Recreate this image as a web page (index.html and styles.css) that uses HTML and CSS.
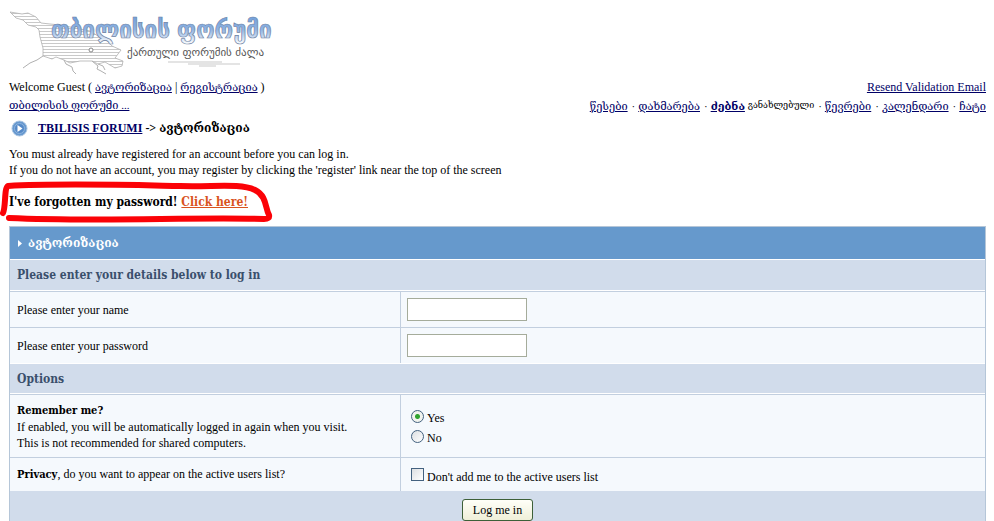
FILE: index.html
```html
<!DOCTYPE html>
<html lang="ka">
<head>
<meta charset="utf-8">
<title>თბილისის ფორუმი</title>
<link rel="stylesheet" href="styles.css">
</head>
<body>
<header>
  <svg class="logo" width="270" height="70" viewBox="9 7 270 70" role="img" aria-label="თბილისის ფორუმი">
    <defs>
      <linearGradient id="sky" x1="0" y1="0" x2="0" y2="1">
        <stop offset="0" stop-color="#6f9fdc"/><stop offset=".5" stop-color="#8fb3e2"/><stop offset="1" stop-color="#fff"/>
      </linearGradient>
      <pattern id="lines" width="4" height="3" patternUnits="userSpaceOnUse"><path d="M0 1.5H4" stroke="#bbb" stroke-width=".8"/></pattern>
    </defs>
    <path class="map" d="M10 12 16 18 23 20 28 25 36 27 39 30 40 37 43 48 43 56 52 59 56 57 64 60 70 63 80 61 92 61 98 64 105 62 115 68 122 66 123 61 115 58 121 50 112 46 107 41 98 36 90 31 75 28 60 25 50 24 41 23 36 17 28 13 22 14Z"/>
    <path class="coast" d="M43 56 37 60 30 63 23 68M64 60 66 64 72 67 73 71 76 74M92 61 98 66 97 69 101 71 106 74M98 64 103 66 105 70"/>
    <circle cx="91" cy="50" r="2" fill="#fff" stroke="#888"/>
    <text class="logo-title" x="51" y="38">თბილისის</text>
    <text class="logo-title" x="177" y="38">ფორუმი</text>
    <text class="logo-sub" x="127" y="56">ქართული ფორუმის ძალა</text>
    <path d="M168 62H222M188 64H240M199 66H216" stroke="#bbb" stroke-width=".8"/>
  </svg>
  <div class="bar">
    <div>Welcome Guest ( <a class="geo" href="#">ავტორიზაცია</a> | <a class="geo" href="#">რეგისტრაცია</a> )</div>
    <a href="#">Resend Validation Email</a>
  </div>
  <div class="bar geo">
    <a href="#">თბილისის ფორუმი ...</a>
    <nav>
      <a href="#">წესები</a><i>·</i><a href="#">დახმარება</a><i>·</i><a href="#"><b>ძებნა</b></a> <span class="fresh">განახლებული</span><i>·</i><a href="#">წევრები</a><i>·</i><a href="#">კალენდარი</a><i>·</i><a href="#">ჩატი</a>
    </nav>
  </div>
</header>
<div class="crumbs">
  <svg width="17" height="17" viewBox="0 0 17 17" aria-hidden="true">
    <circle cx="8.500" cy="8.500" r="7.500" fill="#6799cf" stroke="#a9c4e2"/>
    <circle cx="8.500" cy="8.500" r="5" fill="#5489c8" stroke="#8fb4de"/>
    <path d="M6.500 5 11.500 8.500 6.500 12Z" fill="#fff"/>
  </svg>
  <div><a href="#">TBILISIS FORUMI</a> -&gt; ავტორიზაცია</div>
</div>
<p class="intro">You must already have registered for an account before you can log in.<br>If you do not have an account, you may register by clicking the 'register' link near the top of the screen</p>
<p class="forgot">I've forgotten my password! <a href="#">Click here!</a>
  <svg class="marker" width="276" height="44" viewBox="0 0 276 44" aria-hidden="true">
    <path d="M3 34C6 28 4 9 8 7C60 4 130 6 180 7C215 8 240 4 255 11C267 17 265 29 269 36Q270 40 264 40C190 38 100 43 9 39"/>
  </svg>
</p>
<form class="panel" onsubmit="return false">
  <h1><svg width="5" height="7" viewBox="0 0 5 7" aria-hidden="true"><path d="M0 0 4 3.500 0 7Z" fill="#fff"/></svg>ავტორიზაცია</h1>
  <h2>Please enter your details below to log in</h2>
  <div class="row">
    <div class="cell"><label for="name">Please enter your name</label></div>
    <div class="cell"><input class="field" type="text" id="name"></div>
  </div>
  <div class="row">
    <div class="cell"><label for="pass">Please enter your password</label></div>
    <div class="cell"><input class="field" type="password" id="pass"></div>
  </div>
  <h2>Options</h2>
  <div class="row tall">
    <div class="cell"><div><b class="lead">Remember me?</b><br>If enabled, you will be automatically logged in again when you visit.<br>This is not recommended for shared computers.</div></div>
    <div class="cell stack">
      <label class="choice"><input type="radio" name="remember" checked><span>Yes</span></label>
      <label class="choice"><input type="radio" name="remember"><span>No</span></label>
    </div>
  </div>
  <div class="row privacy">
    <div class="cell"><div><b class="lead">Privacy</b>, do you want to appear on the active users list?</div></div>
    <div class="cell stack"><label class="choice"><input type="checkbox"><span>Don't add me to the active users list</span></label></div>
  </div>
  <div class="foot"><button type="submit">Log me in</button></div>
</form>
</body>
</html>
```
FILE: styles.css
```css
* { box-sizing: border-box; }
body {
  margin: 0;
  padding: 7px 8px 0 9px;
  background: #fff;
  color: #000;
  font: 12px/16px "Liberation Serif", "DejaVu Serif", serif;
}
a { color: #000066; }
p { margin: 0; }
.logo { display: block; margin-bottom: 1px; }
.map { fill: url(#lines); stroke: #b0b0b0; stroke-width: .8; }
.coast { fill: none; stroke: #b0b0b0; stroke-width: 1; }
.logo-title {
  font: bold 25px "DejaVu Sans Condensed", "DejaVu Sans", sans-serif;
  fill: url(#sky);
  stroke: #7084a5;
  stroke-width: .7;
}
.logo-sub { font: 11px "DejaVu Sans", sans-serif; fill: #555; }
.bar { display: flex; justify-content: space-between; height: 18px; align-items: center; }
.geo { font-size: 11px; }
nav i { padding: 0 3px 0 4px; font-style: normal; }
.fresh { font-size: 9px; vertical-align: 2px; }
.crumbs { display: flex; align-items: center; gap: 10px; height: 28px; padding-left: 2px; font-weight: bold; }
.intro { padding-top: 4px; }
.forgot, h2, .lead { font-family: "DejaVu Serif Condensed", "DejaVu Serif", serif; font-size: 11px; font-weight: bold; }
.forgot { position: relative; padding: 16px 0; }
.forgot a { color: #d9531e; }
.marker { position: absolute; left: -9px; top: 1px; pointer-events: none; }
.marker path { fill: none; stroke: #fb0207; stroke-width: 6; stroke-linecap: round; stroke-linejoin: round; }
.panel { border: 1px solid #b5c6d8; }
h1, h2 { display: flex; align-items: center; margin: 0; line-height: 16px; }
h1 { height: 33px; gap: 5px; padding-left: 8px; font-size: 12px; background: #6699cc; color: #fff; border-bottom: 1px solid #fff; }
h2 { height: 31px; padding-left: 7px; background: #d1dceb; color: #3a4f6c; border-bottom: 1px solid #fff; }
.forgot, h2 { font-size: 12px; }
.row { display: grid; grid-template-columns: 2fr 3fr; min-height: 36px; background: #f5f9fd; border-top: 1px solid #c2cfdf; }
.row + h2 { border-top: 1px solid #fff; }
.cell { display: flex; align-items: center; padding: 0 7px; }
.cell + .cell { border-left: 1px solid #c2cfdf; padding-left: 6px; }
.tall { min-height: 63px; }
.privacy { min-height: 34px; }
.stack { flex-direction: column; align-items: flex-start; justify-content: center; }
.field { width: 120px; height: 23px; border: 1px solid #a5ac9b; background: #fff; font: inherit; }
.choice { display: flex; align-items: center; gap: 3px; height: 20px; padding-left: 4px; }
.choice span { padding-top: 4px; }
.choice input { appearance: none; width: 13px; height: 13px; margin: 0; border: 1px solid #43617f; background: linear-gradient(135deg, #dcdfe2, #fff); }
.choice input[type="radio"] { border-radius: 50%; }
.choice input[type="radio"]:checked { background: radial-gradient(circle, #2fa32f 0 2px, #f0f3ee 3px); }
.foot { display: flex; justify-content: center; padding-top: 8px; background: #d1dceb; }
button { height: 22px; padding: 0 10px; border: 1px solid #3d6038; border-radius: 3px; background: linear-gradient(#fffff8, #efefd8); color: #000; font: inherit; }
```
